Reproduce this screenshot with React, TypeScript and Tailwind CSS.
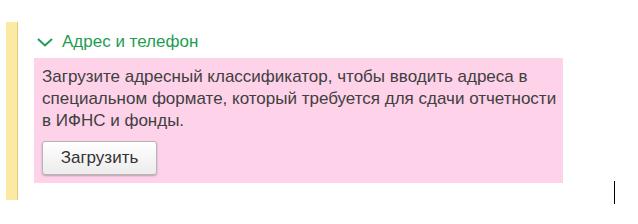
export default function App() {
  return (
    <div
      className="relative h-[224px] w-[638px] bg-white"
      style={{ fontFamily: '"Liberation Sans", Arial, sans-serif' }}>
      <div className="flex pt-[22px] pl-[6px]">
        {/* Left accent bar */}
        <div className="w-[12px] shrink-0 border-r border-[#e3cc78] bg-[#fbe9a4]" />

        <div className="pl-[16px] pb-[17px]">
          {/* Group header */}
          <div className="flex h-[36px] items-center gap-[9px] pt-[3px] pl-[3px] text-[17px] text-[#1f9c52]">
            <svg width="16" height="9" viewBox="0 0 16 9" fill="none" className="mt-[1px]">
              <polyline points="1,1 8,7.5 15,1" stroke="currentColor" strokeWidth="2" />
            </svg>
            <span>Адрес и телефон</span>
          </div>

          {/* Info box */}
          <div className="w-[529px] bg-[#fed2e9] pl-[8px] pr-0 pt-[8px] pb-[8px]">
            <p className="text-[17px] leading-[22px] text-[#404040]">
              Загрузите адресный классификатор, чтобы вводить адреса в
              специальном формате, который требуется для сдачи отчетности
              в ИФНС и фонды.
            </p>
            <button className="mt-[9px] h-[34px] w-[115px] rounded-[3px] border border-[#b5b5b5] bg-gradient-to-b from-white to-[#ececec] text-[17px] text-[#333] shadow-[0_1px_2px_rgba(0,0,0,0.25)]">
              Загрузить
            </button>
          </div>
        </div>
      </div>

      {/* Text cursor */}
      <div className="absolute left-[614px] top-[181px] h-[23px] w-px bg-black" />
    </div>
  );
}
